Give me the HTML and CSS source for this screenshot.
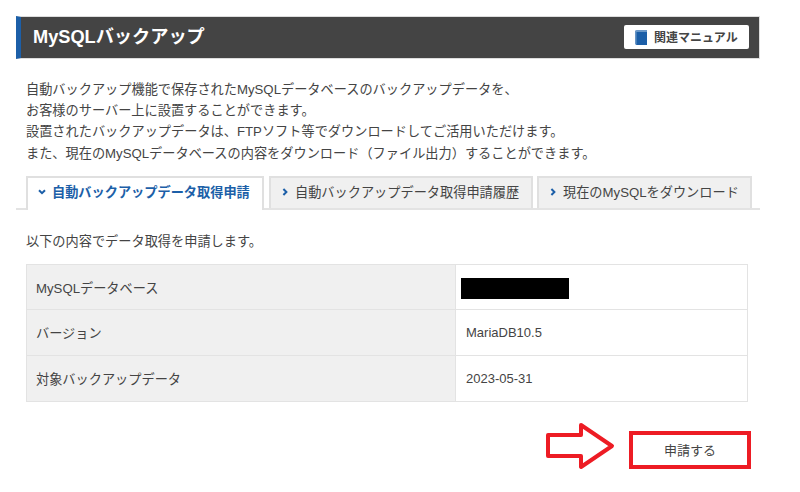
FILE: index.html
```html
<!DOCTYPE html>
<html lang="ja">
<head>
<meta charset="utf-8">
<title>MySQLバックアップ</title>
<link rel="stylesheet" href="styles.css">
</head>
<body>
<main class="page">
  <header class="head">
    <h1 class="title">MySQLバックアップ</h1>
    <a class="manual">
      <svg class="book" viewBox="0 0 12 15" width="12" height="15"><path d="M2 0H12V15H2C.8 15 0 14.200 0 13V2C0 .8.8 0 2 0Z" fill="#1c5fa8"/><path d="M1 1H12" stroke="#8fb2d6" stroke-width="1.400"/><path d="M.8 1V14" stroke="#6f9bc8" stroke-width="1.400"/></svg>
      <span class="manual-text">関連マニュアル</span>
    </a>
  </header>
  <p class="intro">自動バックアップ機能で保存されたMySQLデータベースのバックアップデータを、<br>お客様のサーバー上に設置することができます。<br>設置されたバックアップデータは、FTPソフト等でダウンロードしてご活用いただけます。<br>また、現在のMySQLデータベースの内容をダウンロード（ファイル出力）することができます。</p>
  <nav class="tabs">
    <a class="tab tab-active"><svg class="chev" viewBox="0 0 8 8" width="8" height="8"><path d="M1 2.200 4 5.200 7 2.200" fill="none" stroke="#1c5fa8" stroke-width="2"/></svg>自動バックアップデータ取得申請</a>
    <a class="tab tab-2"><svg class="chev" viewBox="0 0 8 8" width="8" height="8"><path d="M2.400 1 5.400 4 2.400 7" fill="none" stroke="#1c5fa8" stroke-width="2"/></svg>自動バックアップデータ取得申請履歴</a>
    <a class="tab tab-3"><svg class="chev" viewBox="0 0 8 8" width="8" height="8"><path d="M2.400 1 5.400 4 2.400 7" fill="none" stroke="#1c5fa8" stroke-width="2"/></svg>現在のMySQLをダウンロード</a>
  </nav>
  <section class="panel">
    <p class="lead">以下の内容でデータ取得を申請します。</p>
    <table class="info">
      <tr><th>MySQLデータベース</th><td><span class="redact"></span></td></tr>
      <tr><th>バージョン</th><td>MariaDB10.5</td></tr>
      <tr><th>対象バックアップデータ</th><td>2023-05-31</td></tr>
    </table>
    <div class="actions">
      <svg class="arrow" viewBox="0 0 72 48" width="72" height="48"><path d="M3 13H36V3L67 24 36 45V34H3Z" fill="#fff" stroke="#ed1c24" stroke-width="4" stroke-linejoin="round"/></svg>
      <button class="submit">申請する</button>
    </div>
  </section>
</main>
</body>
</html>
```
FILE: styles.css
```css
* { box-sizing: border-box; }
html, body { margin: 0; padding: 0; background: #fff; }
body { width: 800px; height: 492px; overflow: hidden; font-family: "Liberation Sans", "Noto Sans CJK JP", sans-serif; color: #444; font-size: 13.2px; }
.page { width: 744px; margin: 16px 0 0 16px; }
.head { height: 43px; background: #444; border: 1px solid #ddd; border-left: 5px solid #1c5fa8; display: flex; align-items: center; justify-content: space-between; padding: 0 10px 0 12px; }
.title { margin: 0 0 5px; font-size: 18.2px; font-weight: bold; color: #fff; }
.manual { width: 125px; height: 24px; margin-bottom: 1px; background: #fff; border-radius: 2px; display: flex; align-items: center; gap: 7px; padding-left: 11px; color: #444; font-size: 12px; font-weight: bold; }
.manual-text { padding-bottom: 1px; }
.book { flex: none; }
.intro { margin: 20px 0 0 10px; line-height: 21.2px; white-space: nowrap; }
.tabs { display: flex; margin-top: 12px; height: 34px; padding-left: 10px; border-bottom: 2px solid #e3e3e3; align-items: flex-start; }
.tab { height: 32px; background: #f0f0f0; border: 2px solid #e0e0e0; border-bottom: 0; display: flex; align-items: center; gap: 6px; padding: 0 0 2px 10px; white-space: nowrap; }
.tab-active { width: 238px; height: 34px; background: #fff; color: #1c5fa8; font-weight: bold; z-index: 1; padding-bottom: 4px; }
.tab-2 { width: 264px; margin-left: 5px; }
.tab-3 { width: 215px; margin-left: 4px; }
.panel { padding: 22px 0 0 10px; }
.lead { margin: 0 0 12px; line-height: 20px; }
.info { width: 722px; border-collapse: collapse; table-layout: fixed; }
.info th, .info td { height: 45.6px; border: 1px solid #e3e3e3; padding: 0 10px; text-align: left; font-weight: normal; font-size: 13.2px; }
.info th { width: 429px; background: #f0f0f0; padding-left: 9px; }
.info td { background: #fff; font-size: 13px; }
.redact { display: block; width: 108px; height: 21px; margin: 3px 0 0 -5px; background: #000; }
.actions { display: flex; justify-content: flex-end; margin: 29px 9px 0 0; position: relative; }
.arrow { position: absolute; left: 519px; top: -9px; }
.submit { width: 122px; height: 38px; background: #fff; border: 4px solid #ed1c24; font: inherit; font-size: 13px; color: #444; padding: 0; }
```
